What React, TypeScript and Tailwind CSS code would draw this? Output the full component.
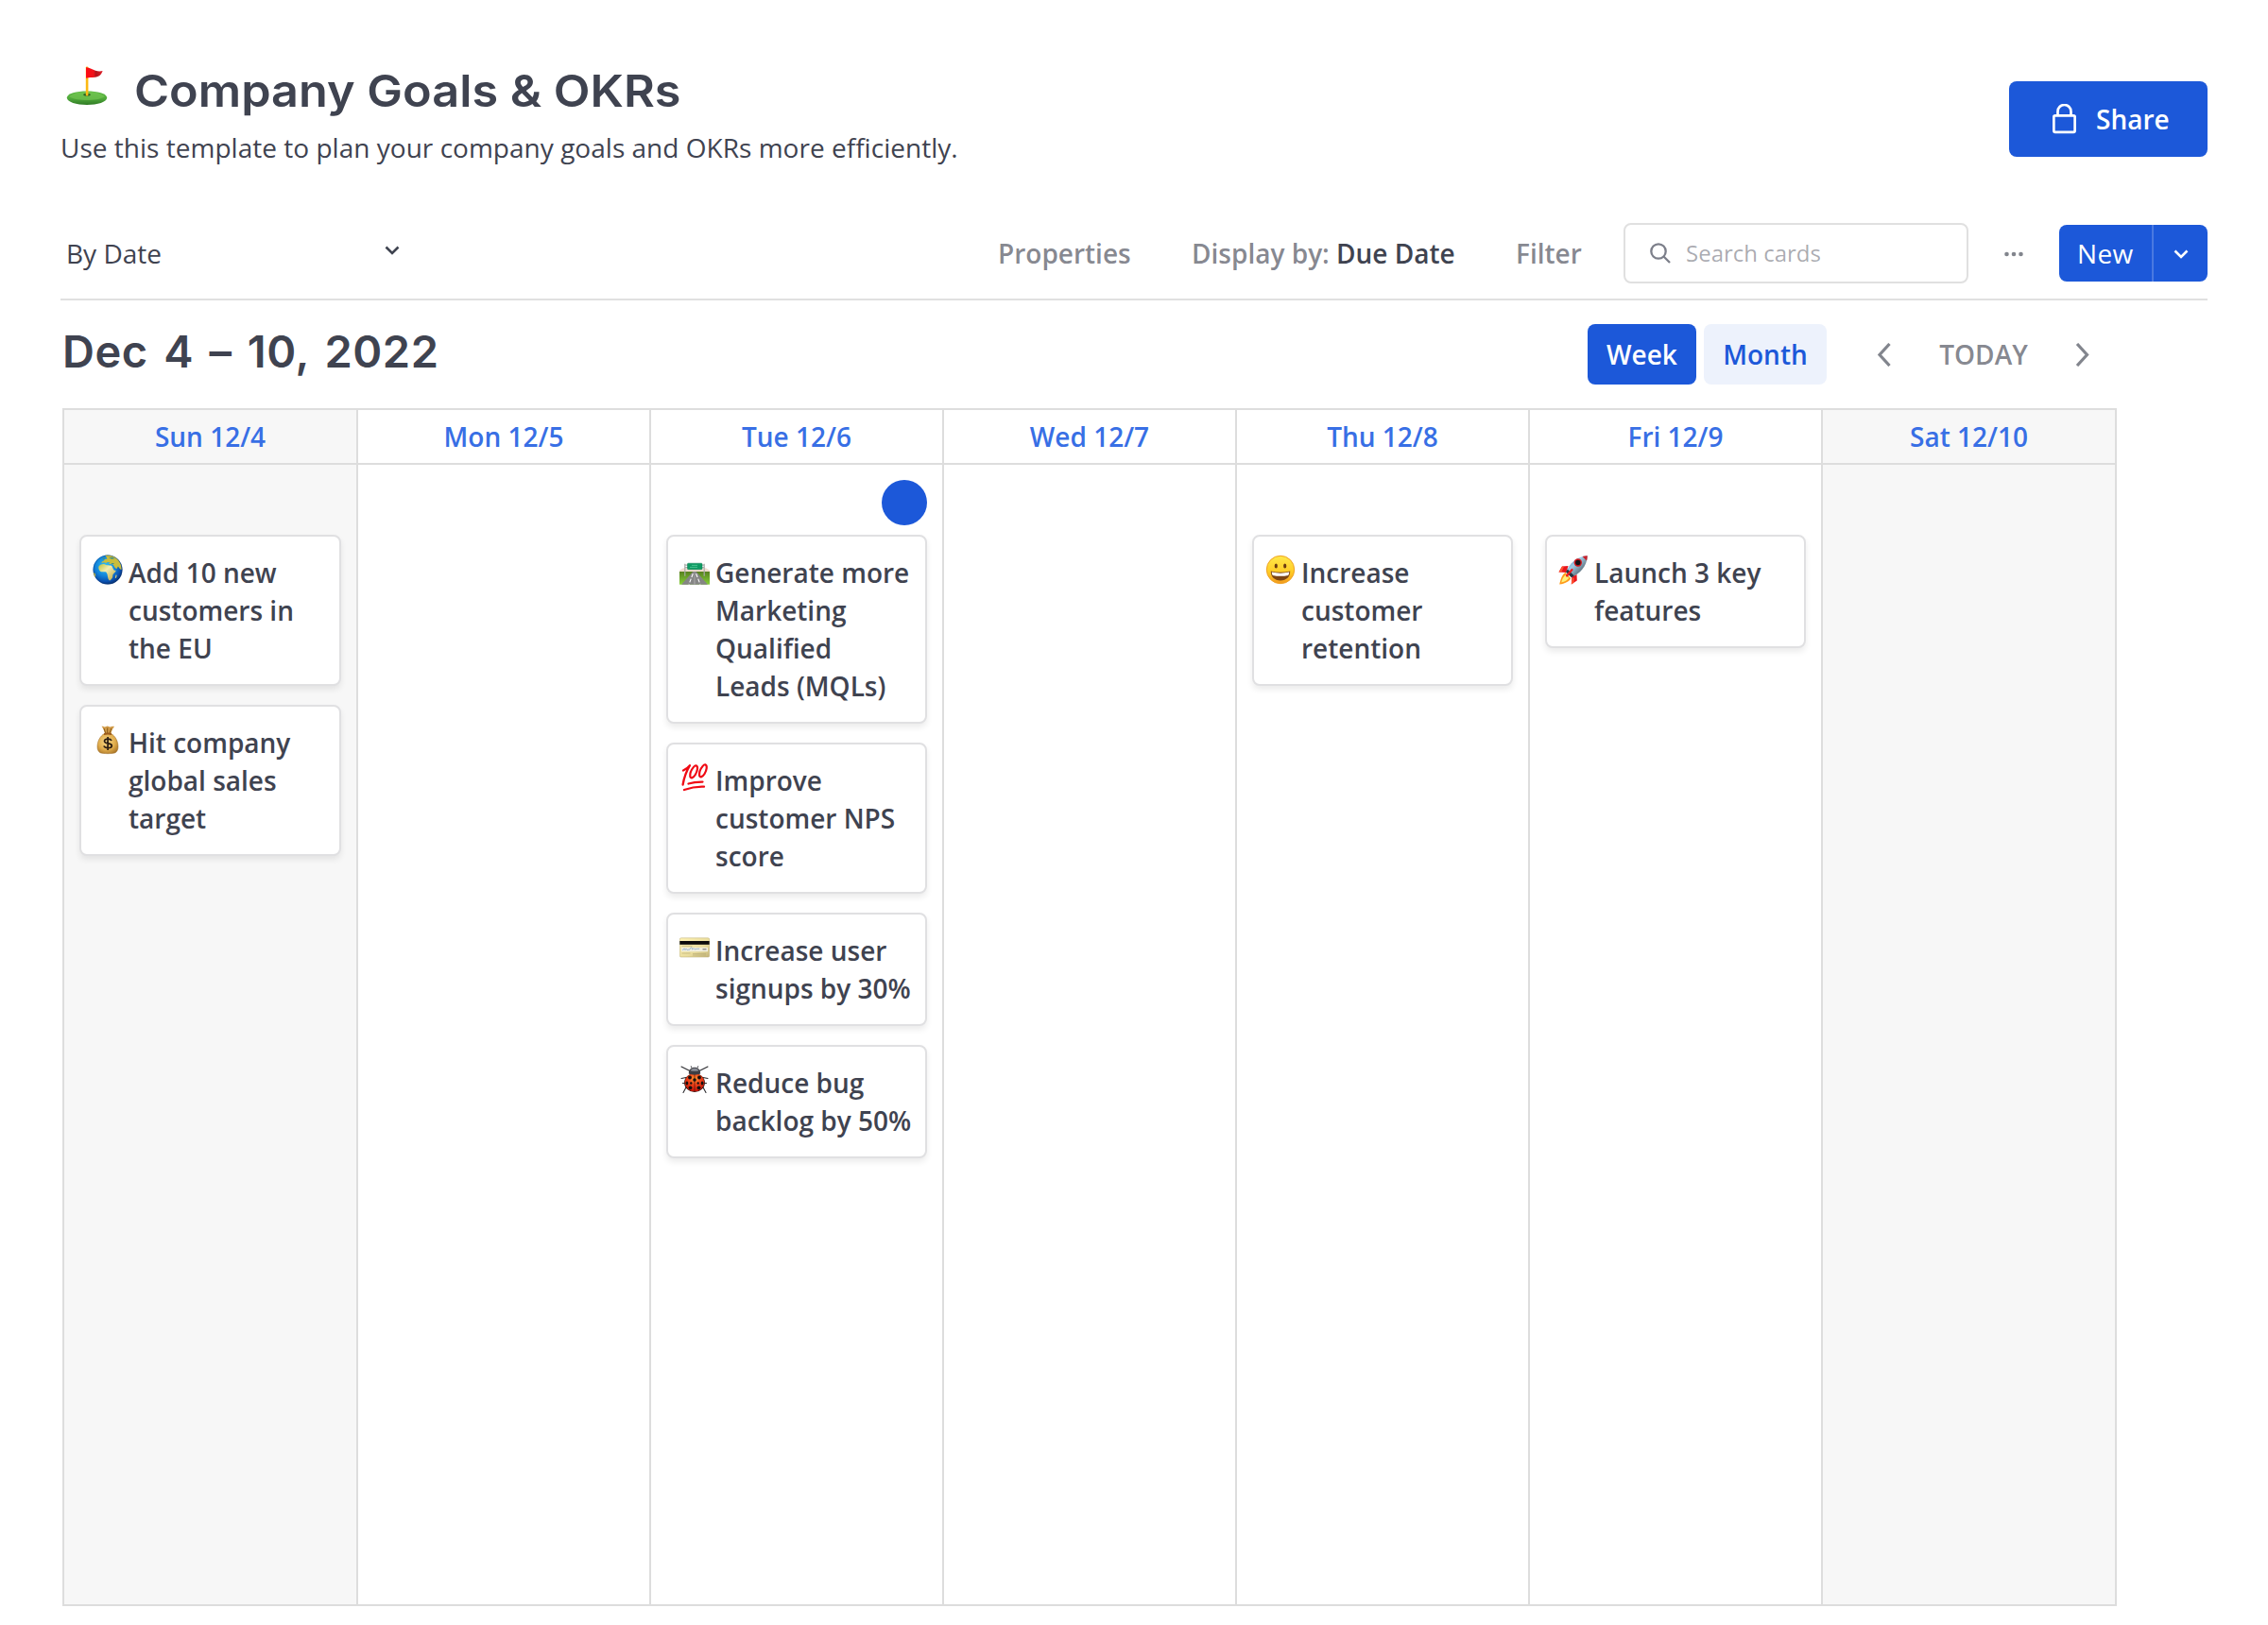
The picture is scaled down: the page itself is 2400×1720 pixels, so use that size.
import React from "react";

type IconProps = { className?: string };

const FlagIcon = ({ className }: IconProps) => (
  <svg viewBox="0 0 44 42" className={className}>
    <defs>
      <linearGradient id="green" x1="0" y1="0" x2="0" y2="1">
        <stop offset="0" stopColor="#5fbb45" />
        <stop offset="0.55" stopColor="#4fa83a" />
        <stop offset="1" stopColor="#2f7a24" />
      </linearGradient>
      <linearGradient id="cloth" x1="0" y1="0" x2="1" y2="0">
        <stop offset="0" stopColor="#ff0a12" />
        <stop offset="0.45" stopColor="#f0141c" />
        <stop offset="0.6" stopColor="#b3141c" />
        <stop offset="1" stopColor="#e0202a" />
      </linearGradient>
    </defs>
    <path d="M0.800 33.500C0.800 29 11 26.500 22 26.500S43.200 29 43.200 33.500C43.200 38 33 41 22 41S0.800 38 0.800 33.500Z" fill="url(#green)" />
    <path d="M3 32.300c5-4 12-5.200 19-5.200s14 1.200 19 5.200c-5 3-12 3.700-19 3.700s-14-.7-19-3.700z" fill="#7acb55" opacity=".55" />
    <ellipse cx="22" cy="30.300" rx="3.800" ry="1.400" fill="#2c5a22" />
    <rect x="20.800" y="0.500" width="2.600" height="31" rx="1" fill="#fcb913" />
    <path d="M21 1.300c4 .2 7 2.600 10 3.500 2.800.8 5.500.8 7.600.2-1 3.800-4 6.500-8 6.700-3.500.2-6 .3-9.600 1z" fill="url(#cloth)" />
  </svg>
);

const GlobeIcon = () => (
  <svg viewBox="0 0 32 32" className="size-8">
    <defs>
      <radialGradient id="sea" cx=".42" cy=".38" r=".62">
        <stop offset="0" stopColor="#35c6f4" />
        <stop offset=".55" stopColor="#1282d8" />
        <stop offset=".85" stopColor="#0a4fae" />
        <stop offset="1" stopColor="#083577" />
      </radialGradient>
      <linearGradient id="land" x1="0" y1="0" x2="1" y2="1">
        <stop offset="0" stopColor="#b9c23c" />
        <stop offset=".4" stopColor="#f3ecb0" />
        <stop offset="1" stopColor="#b8a33a" />
      </linearGradient>
      <clipPath id="globe"><circle cx="16" cy="16" r="15.500" /></clipPath>
    </defs>
    <circle cx="16" cy="16" r="15.500" fill="url(#sea)" />
    <g clipPath="url(#globe)">
      <path d="M6.500 12.500c1-1.600 2.600-2.400 5-2.500 1.400-.1 2 .9 3.600 1.200 1.700.3 4.200-.2 5.200.9.8 1.200 1 3 2.400 4.300.8.400 1.800 0 2 .7-.3 1.700-2.600 2.800-3.300 4.500-.3 1.600.1 2.600-1 3.700-.9 1-1.400 2-2.500 2.200-1.400-.8-1.700-3-2-4.700-.2-1.700-.5-3.200-1.700-4.300-1.600-.6-4 .3-5.700-.5-1.700-1-2.600-3.800-2-5.500z" fill="url(#land)" />
      <path d="M13 .5c4-.8 9 .3 12.500 3.500 3.500 3 5.500 8 5 12-1.600-.2-2.200-1.700-3.500-3.500-1 .8-.6 2-1.800 2.600-1.600-.7-2.500-3-3.600-4.600-1.900-.4-3.300.2-4.600-.9l1.700-1.100-3-.6-1.500 1.100-2.200-.7-2.400.8c-.2-1.300.7-2.100 2-2.300l1.500-1.700 2.400-.5-.8-1.700z" fill="#c9bd3c" />
      <path d="M10 4l2.500-1.300.6 1.600-1.600 1.200zM17 3.500l4-.8 2.600 1.600-3.200.5zM20 9l3 .3-.6.8-2.600-.2z" fill="#3f8f86" />
      <path d="M0 19l2.500.8c.5 1.300 1 2.500.5 4.200H0z" fill="#d6c23c" />
      <path d="M24.600 21.500l1.100.2-.8 3.200-1.100-.4z" fill="#d8cf78" />
    </g>
    <circle cx="16" cy="16" r="15.200" fill="none" stroke="#082f6b" strokeOpacity=".45" strokeWidth=".7" />
  </svg>
);

const MoneyIcon = () => (
  <svg viewBox="0 0 32 32" className="size-8">
    <defs>
      <radialGradient id="bag" cx=".45" cy=".4" r=".75">
        <stop offset="0" stopColor="#f8d888" />
        <stop offset=".55" stopColor="#e0ac4c" />
        <stop offset="1" stopColor="#9a661d" />
      </radialGradient>
    </defs>
    <path d="M9.500 1.800c1.500-.4 2.400.5 3.300.6 1-.1 1.800-.9 2.900-.9s1.800 1 2.800.9c1.200-.1 2.500-1 4.500-.3-1.500 2-3 4.500-3.400 7.400h-6.800c-.4-3-1.800-5.800-3.300-7.700z" fill="#d09a48" />
    <path d="M12 4l1.800 5M15.700 3.500v5.500M19.800 4L18 9" stroke="#815314" strokeWidth=".9" fill="none" />
    <path d="M12.500 9.500h7c4.500 2.500 7.500 8 7.500 14 0 3-1.200 5-3 6.300-4.500 1.200-11.500 1.200-16 0C6.200 28.500 5 26.500 5 23.500c0-6 3-11.500 7.500-14z" fill="url(#bag)" stroke="#9a671f" strokeWidth=".5" />
    <path d="M12 9.200c2.600-.8 5.400-.8 8 0v1.700c-2.600-.7-5.400-.7-8 0z" fill="#9b5a1a" />
    <path d="M20 17c-.6-1.300-1.900-1.900-3.800-1.900-2.300 0-3.700.9-3.700 2.400 0 3.400 7.800 1.500 7.800 4.800 0 1.500-1.600 2.400-4 2.400-2.100 0-3.700-.7-4.400-2.200M16.100 13v14" stroke="#2a1c10" strokeWidth="1.700" fill="none" />
  </svg>
);

const RoadIcon = () => (
  <svg viewBox="0 -4.700 32 32" className="size-8">
    <defs>
      <linearGradient id="grass" x1="0" y1="0" x2="0" y2="1">
        <stop offset="0" stopColor="#57801f" />
        <stop offset="1" stopColor="#86cf3a" />
      </linearGradient>
    </defs>
    <path d="M0 12l4-2.500h24L32 12v2H0z" fill="#f1ddd0" />
    <rect y="13.300" width="32" height="13.700" fill="url(#grass)" />
    <path d="M14.300 13.300h3.400L30 27H2z" fill="#858585" />
    <path d="M15.600 14h.8l.7 13h-2.200z" fill="#9b9b9b" />
    <path d="M14.300 15.500L10 26.800M17.600 15.500L22 26.800" stroke="#fff" strokeWidth="1.100" strokeDasharray="4 1.800" fill="none" />
    <path d="M5.800 5v13M26.200 5v13M5.500 6.500h21M6 9h20" stroke="#a9aba9" strokeWidth="1.200" fill="none" />
    <rect x="8.500" y="4.500" width="15.500" height="6.500" rx=".8" fill="#0e9a63" stroke="#0a7c50" strokeWidth=".5" />
    <path d="M13 6.700h6M11 8.700h8" stroke="#5ed3a0" strokeWidth=".7" />
  </svg>
);

const HundredIcon = () => (
  <svg viewBox="0 0 32 32" className="size-8">
    <g fill="none" stroke="#f00a14" strokeLinecap="round" strokeLinejoin="round">
      <path d="M4 8.500c3-1.300 5-2.800 7-5.300C7.500 9 5 15.500 3.600 23.500" strokeWidth="2.300" />
      <path d="M17.600 3.300c2.600 1 1.300 6.200-.8 9.700-2 3.300-5 4.500-5.500 1.800-.4-3 1.500-7.300 3.500-9.700 1-1.200 1.900-2 2.800-1.800z" strokeWidth="2.200" />
      <path d="M27.300 2.300c2.600 1 1.400 6.200-.7 9.700-2 3.300-5 4.500-5.500 1.800-.4-3 1.400-7.300 3.400-9.700 1-1.200 1.900-2 2.800-1.800z" strokeWidth="2.200" />
      <path d="M9.500 22.500c4.500-1.400 9.500-2 15-1.900" strokeWidth="2.300" />
      <path d="M5 29c6.500-2.400 13.500-3.700 21-3.400" strokeWidth="2.300" />
    </g>
  </svg>
);

const CreditCardIcon = () => (
  <svg viewBox="0 0 32 32" className="size-8">
    <defs>
      <linearGradient id="card" x1="0" y1="0" x2="1" y2="1">
        <stop offset="0" stopColor="#fff3b4" />
        <stop offset=".6" stopColor="#e9dc9c" />
        <stop offset="1" stopColor="#c3b478" />
      </linearGradient>
    </defs>
    <rect x=".3" y="5.800" width="31.400" height="20.200" rx="1.500" fill="url(#card)" stroke="#b9ab72" strokeWidth=".5" />
    <rect x=".3" y="9" width="31.400" height="3.800" fill="#0b0b0b" />
    <rect x="2" y="15.800" width="28" height="4.400" fill="#f1eedd" />
    <path d="M3.500 19c1.500-3 2-2.500 2.500-.5.800-1.500 1.500-1.500 2.200 0 1.500-.5 2 0 3-.8 1-2.800 2-2.700 2.300.3 1-1.200 2-1.200 2.700-.2 1.500-.4 3-.6 5-.6" stroke="#86a9c8" strokeWidth=".8" fill="none" />
    <path d="M24.500 17.800h4" stroke="#686868" strokeWidth="1" />
    <path d="M2.500 14.400h11M2.500 22h9M14 22.500h14M14 24h14" stroke="#b5a974" strokeWidth=".6" />
  </svg>
);

const LadybugIcon = () => (
  <svg viewBox="0 0 32 32" className="size-8">
    <defs>
      <radialGradient id="shell" cx=".5" cy=".3" r=".7">
        <stop offset="0" stopColor="#ff9a30" />
        <stop offset=".45" stopColor="#f2441a" />
        <stop offset="1" stopColor="#c01208" />
      </radialGradient>
    </defs>
    <path d="M11 6.500L2 2M21 6.500L30 2M7 13.500L2 14.500M25 13.500l5 1M6 19.500H3.500M26 19.500h2.500M7.500 23L4 29.500M24.500 23l3.500 6.500" stroke="#2c2c30" strokeWidth="1.100" fill="none" strokeLinecap="round" />
    <path d="M13 3.500l-.8-2.200M19 3.500l.8-2.200" stroke="#4a4a50" strokeWidth="1" />
    <ellipse cx="16" cy="19" rx="10.900" ry="10" fill="#25120f" />
    <ellipse cx="16" cy="18.700" rx="10.400" ry="9.600" fill="url(#shell)" />
    <path d="M9.800 9.500C9.800 5 12.500 2.800 16 2.800s6.200 2.200 6.200 6.700c-3.500 1.500-9 1.500-12.400 0z" fill="#3d3e44" />
    <path d="M11.500 6.200c1.300-2 2.900-2.500 4.500-2.500s3.200.5 4.500 2.500c-3 .8-6 .8-9 0z" fill="#8a8d96" />
    <path d="M16 10.500V28" stroke="#5d120a" strokeWidth=".8" />
    <g fill="#17100f">
      <circle cx="11" cy="13.500" r="1.900" /><circle cx="21" cy="13.500" r="1.900" />
      <circle cx="16" cy="16" r="1.800" />
      <ellipse cx="7.900" cy="19.500" rx="1.400" ry="1.900" /><ellipse cx="24.100" cy="19.500" rx="1.400" ry="1.900" />
      <circle cx="12.300" cy="19.500" r="1.200" /><circle cx="19.700" cy="19.500" r="1.200" />
      <circle cx="11.500" cy="24.300" r="1.900" /><circle cx="20.500" cy="24.300" r="1.900" />
    </g>
  </svg>
);

const GrinIcon = () => (
  <svg viewBox="0 0 32 32" className="size-8">
    <defs>
      <linearGradient id="face" x1="0" y1="0" x2="0" y2="1">
        <stop offset="0" stopColor="#ffe94a" />
        <stop offset=".6" stopColor="#ffcb25" />
        <stop offset="1" stopColor="#f29a1c" />
      </linearGradient>
    </defs>
    <circle cx="16" cy="16" r="14.700" fill="url(#face)" stroke="#f0a224" strokeWidth="1" />
    <ellipse cx="11.300" cy="12" rx="1.600" ry="2.600" fill="#6b3a10" />
    <ellipse cx="20.700" cy="12" rx="1.600" ry="2.600" fill="#6b3a10" />
    <path d="M5.800 17.500c6.500 1.600 13.900 1.600 20.400 0 .3 5.700-4 10-10.200 10S5.500 23.200 5.800 17.500z" fill="#7c4514" />
    <path d="M6.800 18.600c6 1.400 12.400 1.400 18.400 0 0 1.500-.3 2.300-.9 3.300-5.500 1.200-11.100 1.200-16.600 0-.6-1-.9-1.800-.9-3.300z" fill="#fff" />
  </svg>
);

const RocketIcon = () => (
  <svg viewBox="0 0 32 32" className="size-8">
    <defs>
      <linearGradient id="hull" x1="0" y1="0" x2="1" y2="1">
        <stop offset="0" stopColor="#3d83b8" />
        <stop offset=".4" stopColor="#9fcbe4" />
        <stop offset=".65" stopColor="#6f8796" />
        <stop offset="1" stopColor="#3b4752" />
      </linearGradient>
    </defs>
    <path d="M10.500 12L4 12.500.5 18.500l8 .5zM19.500 21l.3 6.500-6 4 .5-8z" fill="#e8141c" />
    <path d="M.5 18.500l3.500-6 2 .2-2.500 5.600zM13.800 31.500l.9-7 2 .3-.3 5z" fill="#ff5230" />
    <path d="M7.500 19c-3.500 2-5 7-6.300 12.500 5.800-1 10.300-2.800 12-6.300z" fill="#ff9a1a" />
    <path d="M7.600 21.500c-2 1.800-3.600 4.500-4.400 8 3.800-1 6.500-2.500 8-4.800z" fill="#fff27a" />
    <path d="M8.500 18C11.500 9.500 19.500 1.800 30.800 1.200 30.400 12.500 22.500 20.500 14 23.500z" fill="url(#hull)" />
    <path d="M25.500 2c1.800-.5 3.500-.8 5.300-.8-.1 1.800-.3 3.500-.8 5.200z" fill="#c9202a" />
    <path d="M8 18.500l1.800-3 7 7-3 1.800z" fill="#26333e" />
    <circle cx="20.800" cy="8.500" r="4.200" fill="#d3161c" />
    <circle cx="20.800" cy="8.500" r="2.700" fill="#101418" />
    <path d="M14.500 16L9 22.500" stroke="#f01c20" strokeWidth="2.200" strokeLinecap="round" />
  </svg>
);

const Chevron = ({ d, box, className }: { d: string; box: string; className: string }) => (
  <svg viewBox={box} className={className} fill="none" stroke="currentColor">
    <path d={d} />
  </svg>
);

type Card = { icon: React.ReactNode; lines: string[] };
type Day = { label: string; off?: boolean; today?: boolean; cards: Card[] };

const days: Day[] = [
  {
    label: "Sun 12/4",
    off: true,
    cards: [
      { icon: <GlobeIcon />, lines: ["Add 10 new", "customers in", "the EU"] },
      { icon: <MoneyIcon />, lines: ["Hit company", "global sales", "target"] },
    ],
  },
  { label: "Mon 12/5", cards: [] },
  {
    label: "Tue 12/6",
    today: true,
    cards: [
      { icon: <RoadIcon />, lines: ["Generate more", "Marketing", "Qualified", "Leads (MQLs)"] },
      { icon: <HundredIcon />, lines: ["Improve", "customer NPS", "score"] },
      { icon: <CreditCardIcon />, lines: ["Increase user", "signups by 30%"] },
      { icon: <LadybugIcon />, lines: ["Reduce bug", "backlog by 50%"] },
    ],
  },
  { label: "Wed 12/7", cards: [] },
  { label: "Thu 12/8", cards: [{ icon: <GrinIcon />, lines: ["Increase", "customer", "retention"] }] },
  { label: "Fri 12/9", cards: [{ icon: <RocketIcon />, lines: ["Launch 3 key", "features"] }] },
  { label: "Sat 12/10", off: true, cards: [] },
];

const CardView = ({ icon, lines }: Card) => (
  <div className="flex rounded-lg border-2 border-[#e0e0e2] bg-white py-[18px] pl-3 shadow-[0_4px_6px_rgba(0,0,0,0.08)]">
    <div className="mt-px mr-1.5 h-8 w-8 shrink-0">{icon}</div>
    <div className="font-semibold whitespace-nowrap text-[#3f4350]">
      {lines.map((l) => (
        <div key={l}>{l}</div>
      ))}
    </div>
  </div>
);

export default function App() {
  return (
    <div className="h-[1720px] w-[2400px] overflow-hidden bg-white pl-16 font-['Open_Sans',sans-serif] text-[28px] leading-10 text-[#3f4350]">
      <header className="flex h-[236px] w-[2272px] justify-between">
        <div className="pt-[70px]">
          <div className="flex h-[66px] items-start">
            <FlagIcon className="ml-1.5 h-[42px] w-[44px]" />
            <h1 className="mt-0.5 ml-7 origin-left scale-x-[1.072] font-['Inter',sans-serif] text-[47px] leading-[48px] font-semibold whitespace-nowrap">
              Company Goals &amp; OKRs
            </h1>
          </div>
          <p className="tracking-[0.020px] whitespace-nowrap">
            Use this template to plan your company goals and OKRs more efficiently.
          </p>
        </div>
        <button className="mt-[86px] flex h-20 w-[210px] items-center rounded-lg bg-[#1c58d9] pl-[46px] font-semibold text-white">
          <svg viewBox="0 0 26 32" className="mr-5 h-8 w-[26px]" fill="none" stroke="currentColor" strokeWidth="2.700">
            <rect x="1.350" y="12.350" width="22.300" height="17.500" rx="1.500" />
            <path d="M5.500 12V8a7 7 0 0 1 14 0V12" />
          </svg>
          Share
        </button>
      </header>

      <div className="flex h-[82px] w-[2272px] items-start justify-between border-b-2 border-[#e0e0e0]">
        <div className="flex h-16 items-center pl-1.5">
          <span className="w-[337px]">By Date</span>
          <Chevron d="M1.500 1.500L8 8l6.500-6.500" box="0 0 16 10" className="-mt-1.5 h-[10px] w-4 stroke-[2.600]" />
        </div>
        <div className="flex h-16 items-center font-semibold text-[#3f4350]/65">
          <span className="w-[205px]">Properties</span>
          <span className="w-[343px] whitespace-nowrap">
            Display by: <span className="text-[#3f4350]">Due Date</span>
          </span>
          <span className="w-[114px]">Filter</span>
          <div className="flex h-16 w-[365px] items-center rounded-lg border-2 border-[#e0e0e0] pl-[26px] text-[24px] font-normal text-[#3f4350]/45">
            <svg viewBox="0 0 22 22" className="mr-4 size-[22px] text-[#7c7f8a]" fill="none" stroke="currentColor" strokeWidth="2.300">
              <circle cx="9" cy="9" r="7.700" />
              <path d="M14.500 14.500L21 21" />
            </svg>
            Search cards
          </div>
          <svg viewBox="0 0 20 6" className="mt-0.5 ml-[38px] h-1.5 w-5 fill-current">
            <circle cx="2.500" cy="3" r="2.300" />
            <circle cx="10" cy="3" r="2.300" />
            <circle cx="17.500" cy="3" r="2.300" />
          </svg>
          <div className="ml-[38px] flex h-[60px] w-[157px] overflow-hidden rounded-lg bg-[#1c58d9] font-normal text-white">
            <div className="flex w-[100px] items-center border-r-2 border-white/20 pl-[19px] tracking-[0.300px]">New</div>
            <div className="flex flex-1 items-center justify-center">
              <Chevron d="M1.500 1.500L8 8l6.500-6.500" box="0 0 16 10" className="mt-px h-[10px] w-4 stroke-[2.600]" />
            </div>
          </div>
        </div>
      </div>

      <div className="flex h-[114px] w-[2272px] items-start pt-[25px]">
        <h2 className="mt-[5px] w-[1616px] pl-0.5 font-['Inter',sans-serif] text-[47px] leading-[48px] font-semibold tracking-[0.550px] [word-spacing:4px]">
          Dec 4 – 10, 2022
        </h2>
        <div className="flex h-16 items-center font-semibold">
          <button className="h-16 w-[115px] rounded-lg bg-[#1c58d9] text-white">Week</button>
          <button className="ml-2 h-16 w-[130px] rounded-lg bg-[#edf2fc] text-[#1c58d9]">Month</button>
          <div className="ml-[53px] flex items-center text-[#3f4350]/65">
            <Chevron d="M13.500 1L3 12.500 13.500 24" box="0 0 15 25" className="h-[25px] w-[15px] stroke-[3.200]" />
            <span className="ml-[51px] w-[94px] text-center">TODAY</span>
            <Chevron d="M2 1l10.500 11.500L2 24" box="0 0 15 25" className="ml-[50px] h-[25px] w-[15px] stroke-[3.200]" />
          </div>
        </div>
      </div>

      <div className="ml-0.5 grid h-[1268px] w-[2174px] grid-cols-[311px_310px_310px_310px_310px_310px_313px] border-y-2 border-[#dddddd]">
        {days.map((d) => (
          <section
            key={d.label}
            className={`flex flex-col border-l-2 border-[#dddddd] last:border-r-2 ${d.off ? "bg-[#f7f7f7]" : "bg-white"}`}
          >
            <div className="flex h-[58px] items-center justify-center border-b-2 border-[#dddddd] font-semibold text-[#386fe5]">
              {d.label}
            </div>
            <div className="flex h-[74px] justify-end px-4 pt-4">
              {d.today && <div className="size-12 rounded-full bg-[#1c58d9]" />}
            </div>
            <div className="flex flex-col gap-5 px-4">
              {d.cards.map((c) => (
                <CardView key={c.lines[0]} {...c} />
              ))}
            </div>
          </section>
        ))}
      </div>
    </div>
  );
}
